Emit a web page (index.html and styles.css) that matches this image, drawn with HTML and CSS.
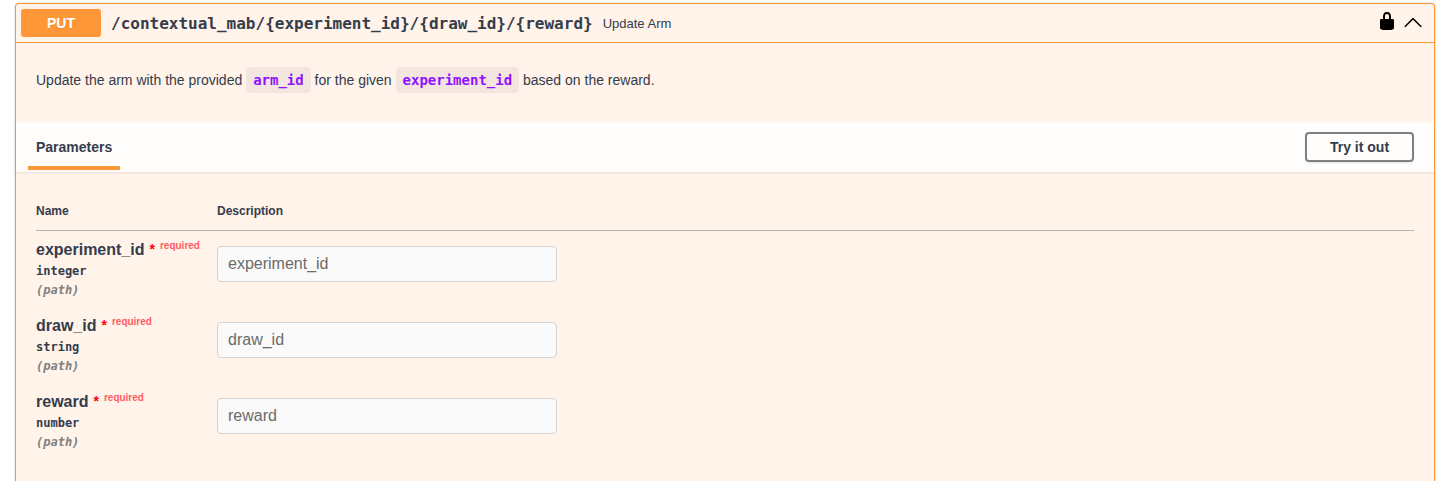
FILE: index.html
```
<!DOCTYPE html>
<html lang="en">
<head>
<meta charset="utf-8">
<title>Update Arm</title>
<link rel="stylesheet" href="styles.css">
</head>
<body>
<section class="opblock">
  <header class="summary">
    <span class="method">PUT</span>
    <span class="path">/contextual_mab/{experiment_id}/{draw_id}/{reward}</span>
    <span class="summary-text">Update Arm</span>
    <svg class="lock" width="20" height="20" viewBox="0 0 20 20"><path d="M15.8 8H14V5.6C14 2.703 12.665 1 10 1 7.334 1 6 2.703 6 5.6V8H4c-.553 0-1 .646-1 1.199V17c0 .549.428 1.139.951 1.307l1.197.387C5.672 18.861 6.55 19 7.1 19h5.8c.549 0 1.428-.139 1.951-.307l1.196-.387c.524-.167.953-.757.953-1.306V9.199C17 8.646 16.352 8 15.8 8zM12 8H8V5.199C8 3.754 8.797 3 10 3c1.203 0 2 .754 2 2.199V8z"/></svg>
    <svg class="arrow" width="20" height="20" viewBox="0 0 20 20"><path d="M17.418 14.908c.272.281.701.281.969 0s.271-.736 0-1.016l-7.908-7.83a.697.697 0 0 0-.969 0l-7.908 7.83c-.268.28-.268.734 0 1.016s.701.281.969 0L10 7.767l7.418 7.141z"/></svg>
  </header>
  <div class="description">
    <p>Update the arm with the provided <code>arm_id</code> for the given <code>experiment_id</code> based on the reward.</p>
  </div>
  <div class="section-header">
    <h4 class="tab">Parameters</h4>
    <button class="try">Try it out</button>
  </div>
  <div class="parameters">
    <div class="row head"><span>Name</span><span>Description</span></div>
    <div class="row">
      <div class="param">
        <div class="name">experiment_id<span class="star">*</span><span class="required">required</span></div>
        <div class="type">integer</div>
        <div class="in">(path)</div>
      </div>
      <input class="field" placeholder="experiment_id" disabled>
    </div>
    <div class="row">
      <div class="param">
        <div class="name">draw_id<span class="star">*</span><span class="required">required</span></div>
        <div class="type">string</div>
        <div class="in">(path)</div>
      </div>
      <input class="field" placeholder="draw_id" disabled>
    </div>
    <div class="row">
      <div class="param">
        <div class="name">reward<span class="star">*</span><span class="required">required</span></div>
        <div class="type">number</div>
        <div class="in">(path)</div>
      </div>
      <input class="field" placeholder="reward" disabled>
    </div>
  </div>
</section>
</body>
</html>
```
FILE: styles.css
```
* { box-sizing: border-box; }
html { background: #fff; }
body {
  margin: 0;
  padding: 3px 11px 0 15px;
  font-family: "Liberation Sans", Arial, sans-serif;
  color: #353c4a;
}
.opblock {
  height: 478px;
  border: 1px solid #ff9637;
  border-bottom: 0;
  border-radius: 4px 4px 0 0;
  background: #fff3ea;
  box-shadow: 0 0 3px rgba(0, 0, 0, .19);
}
.summary {
  display: flex;
  align-items: center;
  height: 39px;
  padding: 0 11px 0 5px;
  border-bottom: 1px solid #ff9637;
}
.method {
  width: 80px;
  height: 28px;
  border-radius: 3px;
  background: #ff9637;
  color: #fff;
  font-size: 14px;
  font-weight: 700;
  line-height: 28px;
  text-align: center;
  text-shadow: 0 1px 0 rgba(0, 0, 0, .1);
}
.path {
  padding: 0 10px;
  font: 700 16px "DejaVu Sans Mono", monospace;
}
.summary-text { flex: 1; font-size: 13px; }
.lock { margin: -4px 6px 0 0; }
.arrow { margin-top: -3px; }
.description {
  height: 79px;
  padding: 24px 20px 0;
  font-size: 14px;
}
.description p { margin: 0; line-height: 26px; }
.description code {
  display: inline-block;
  height: 26px;
  padding: 0 7px;
  border-radius: 4px;
  background: rgba(0, 0, 0, .05);
  color: #9012fe;
  font: 700 14px/26px "DejaVu Sans Mono", monospace;
  vertical-align: top;
}
.section-header {
  display: flex;
  align-items: center;
  justify-content: space-between;
  height: 50px;
  padding: 0 20px 0 12px;
  background: rgba(255, 255, 255, .8);
  box-shadow: 0 1px 2px rgba(0, 0, 0, .1);
}
.tab {
  align-self: flex-start;
  width: 92px;
  height: 46px;
  margin: 2px 0 0;
  padding-left: 8px;
  border-bottom: 4px solid #ff9637;
  font-size: 14px;
  line-height: 46px;
  white-space: nowrap;
}
.try {
  width: 109px;
  height: 30px;
  padding: 0;
  border: 2px solid gray;
  border-radius: 4px;
  background: transparent;
  box-shadow: 0 1px 2px rgba(0, 0, 0, .1);
  color: #353c4a;
  font: 700 14px "Liberation Sans", Arial, sans-serif;
}
.parameters { padding: 20px 20px 0; }
.row { display: grid; grid-template-columns: 181px 340px; height: 76px; align-items: start; }
.head {
  height: 39px;
  border-bottom: 1px solid #b6b0ae;
  font-size: 12px;
  font-weight: 700;
  line-height: 38px;
}
.param { padding-top: 9px; }
.name { height: 22px; font-size: 16px; font-weight: 700; line-height: 20px; white-space: nowrap; }
.star { margin-left: 5px; color: #f00; font-size: 14px; line-height: 1; vertical-align: 1px; }
.required { margin-left: 5px; color: #ff5c64; font-size: 10px; line-height: 10px; vertical-align: 6px; }
.type, .in { font: 700 12px/19px "DejaVu Sans Mono", monospace; }
.in { color: gray; font-style: italic; }
.field {
  width: 340px;
  height: 36px;
  margin-top: 15px;
  padding: 0 10px;
  border: 1px solid #d3d3d5;
  border-radius: 4px;
  background: #fafafa;
  font: 16px "Liberation Sans", Arial, sans-serif;
}
.field::placeholder { color: #6b6b6b; }
```
